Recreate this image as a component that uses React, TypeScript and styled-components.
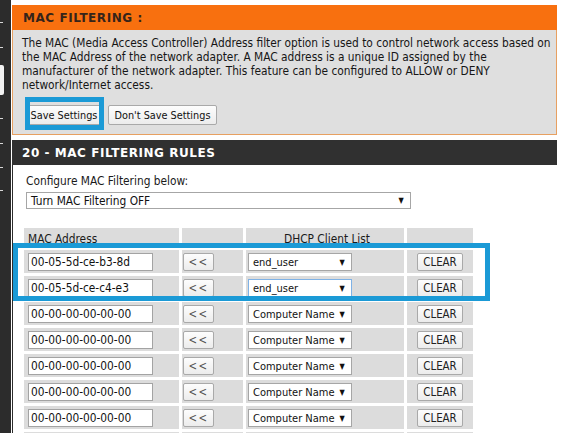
import React from "react";
import styled, { createGlobalStyle } from "styled-components";

const uiFont = `"DejaVu Sans Condensed", "Liberation Sans", sans-serif`;
const titleFont = `"DejaVu Sans", "Liberation Sans", sans-serif`;
const highlight = "#1b9ad6";
const textSize = "11.8px";

const GlobalStyle = createGlobalStyle`
  html, body {
    margin: 0;
    padding: 0;
    background: #ffffff;
    overflow: hidden;
  }
  body {
    font-family: ${uiFont};
    font-size: ${textSize};
    color: #1a1a1a;
  }
`;

const Page = styled.div`
  display: flex;
  gap: 1px;
  height: 433px;
  overflow: hidden;
  background: #ffffff;
`;

const NavStrip = styled.div`
  width: 11px;
  flex: none;
  background: #2c2c2c;
  display: flex;
  flex-direction: column;
`;

const NavTick = styled.div<{ $gap: number; $h?: number }>`
  flex: none;
  margin-top: ${(p) => p.$gap}px;
  height: ${(p) => p.$h ?? 1}px;
  width: ${(p) => (p.$h ? 4 : 3)}px;
  background: ${(p) => (p.$h ? "#f2f2f2" : "#d8d8d8")};
  border-radius: ${(p) => (p.$h ? "0 2px 2px 0" : "0")};
`;

const Content = styled.div`
  width: 545px;
  flex: none;
  padding-top: 5px;
  display: flex;
  flex-direction: column;
  min-height: 0;
`;

const OrangeBox = styled.section`
  flex: none;
  display: flex;
  flex-direction: column;
`;

const OrangeHeader = styled.h2`
  flex: none;
  margin: 0;
  height: 25px;
  background: #f8700f;
  display: flex;
  align-items: center;
  padding-left: 11px;
  font-family: ${titleFont};
  font-weight: bold;
  font-size: 12px;
  letter-spacing: 0.55px;
  color: #35241a;
`;

const OrangeBody = styled.div`
  flex: none;
  background: #dfdfdf;
  border: 1px solid #e7a061;
  border-top: none;
  padding: 6px 6px 9px 9px;
  height: 105px;
  box-sizing: border-box;
`;

const Intro = styled.p`
  margin: 0;
  line-height: 14px;
  font-size: ${textSize};
  color: #161616;
  white-space: nowrap;
`;

const ButtonRow = styled.div`
  display: flex;
  gap: 7px;
  margin-top: 13px;
  padding-left: 5px;
`;

const Btn = styled.button<{ $w?: number }>`
  font-family: ${uiFont};
  font-size: 10.8px;
  color: #111;
  height: 20px;
  ${(p) => (p.$w ? `width: ${p.$w}px;` : "")}
  padding: 0;
  white-space: nowrap;
  border: 1px solid #a9a9a9;
  border-radius: 2px;
  background: linear-gradient(#fdfdfd, #ececec);
  cursor: pointer;
`;

const SmallBtn = styled(Btn)<{ $soft?: boolean }>`
  height: 18px;
  font-size: 11.4px;
  color: ${(p) => (p.$soft ? "#555" : "#222")};
  letter-spacing: ${(p) => (p.$soft ? "1.5px" : "0")};
`;

const Marked = styled.span`
  position: relative;
  display: inline-flex;
`;

const Outline = styled.span<{ $l: number; $t: number; $w: number; $h: number }>`
  position: absolute;
  left: ${(p) => p.$l}px;
  top: ${(p) => p.$t}px;
  width: ${(p) => p.$w}px;
  height: ${(p) => p.$h}px;
  box-sizing: border-box;
  border: 5px solid ${highlight};
  pointer-events: none;
`;

const DarkHeader = styled.h2`
  flex: none;
  margin: 5px 0 0 0;
  height: 25px;
  background: #303030;
  display: flex;
  align-items: center;
  padding-left: 10px;
  font-family: ${titleFont};
  font-weight: bold;
  font-size: 12px;
  letter-spacing: 0.55px;
  color: #ffffff;
`;

const RulesBody = styled.div`
  flex: 1 1 auto;
  min-height: 0;
  overflow: hidden;
  border-left: 1px solid #2c2c2c;
  padding: 9px 0 0 11px;
  background: #ffffff;
`;

const Label = styled.div`
  margin-left: 2px;
  line-height: 14px;
  font-size: ${textSize};
`;

const FakeSelect = styled.div<{ $w: number; $focus?: boolean; $size?: string }>`
  box-sizing: border-box;
  width: ${(p) => p.$w}px;
  height: ${(p) => (p.$focus !== undefined ? 18 : 17)}px;
  border: 1px solid ${(p) => (p.$focus ? "#7fb2e6" : "#a6a6a6")};
  background: #ffffff;
  display: flex;
  align-items: center;
  justify-content: space-between;
  gap: 4px;
  padding: 0 6px 0 4px;
  font-size: ${(p) => p.$size ?? textSize};
  color: #111;
  white-space: nowrap;
`;

const Arrow = styled.span`
  font-family: "DejaVu Sans", sans-serif;
  font-size: 8px;
  color: #111;
  transform: scaleX(0.85);
`;

const TopSelectWrap = styled.div`
  margin: 4px 0 0 2px;
`;

const TableWrap = styled.div`
  position: relative;
  margin-top: 19px;
`;

const Grid = styled.div`
  display: grid;
  grid-template-columns: 155px 61px 158px 66px;
  grid-template-rows: 19px;
  grid-auto-rows: 23px;
  gap: 3px;
`;

const HeadCell = styled.div<{ $center?: boolean }>`
  background: #dcdcdc;
  font-size: ${textSize};
  display: flex;
  align-items: flex-end;
  justify-content: ${(p) => (p.$center ? "center" : "flex-start")};
  padding: 0 0 1px 4px;
  color: #1a1a1a;
`;

const Cell = styled.div<{ $align?: "start" | "center"; $pad?: number }>`
  background: #dcdcdc;
  display: flex;
  align-items: flex-start;
  justify-content: ${(p) => (p.$align === "center" ? "center" : "flex-start")};
  padding: 3px 0 0 ${(p) => p.$pad ?? 0}px;
  box-sizing: border-box;
`;

const MacInput = styled.input`
  box-sizing: border-box;
  width: 125px;
  height: 18px;
  border: 1px solid #a3a3a3;
  padding: 0 2px;
  font-family: ${uiFont};
  font-size: ${textSize};
  color: #111;
  background: #fff;
  outline: none;
`;

type Rule = { mac: string; client: string; focus?: boolean };

const rules: Rule[] = [
  { mac: "00-05-5d-ce-b3-8d", client: "end_user" },
  { mac: "00-05-5d-ce-c4-e3", client: "end_user", focus: true },
  { mac: "00-00-00-00-00-00", client: "Computer Name" },
  { mac: "00-00-00-00-00-00", client: "Computer Name" },
  { mac: "00-00-00-00-00-00", client: "Computer Name" },
  { mac: "00-00-00-00-00-00", client: "Computer Name" },
  { mac: "00-00-00-00-00-00", client: "Computer Name" },
];

const navMarks: { gap: number; h?: number }[] = [
  { gap: 22 },
  { gap: 24 },
  { gap: 17, h: 30 },
  { gap: 23 },
  { gap: 24 },
  { gap: 23 },
  { gap: 22 },
];

export default function App() {
  return (
    <>
      <GlobalStyle />
      <Page>
        <NavStrip>
          {navMarks.map((m, i) => (
            <NavTick key={i} $gap={m.gap} $h={m.h} />
          ))}
        </NavStrip>
        <Content>
          <OrangeBox>
            <OrangeHeader>MAC FILTERING :</OrangeHeader>
            <OrangeBody>
              <Intro>
                The MAC (Media Access Controller) Address filter option is used to control network access based on
                <br />
                the MAC Address of the network adapter. A MAC address is a unique ID assigned by the
                <br />
                manufacturer of the network adapter. This feature can be configured to ALLOW or DENY
                <br />
                network/Internet access.
              </Intro>
              <ButtonRow>
                <Marked>
                  <Btn $w={74}>Save Settings</Btn>
                  <Outline $l={-2} $t={-8} $w={79} $h={33} />
                </Marked>
                <Btn $w={109}>Don't Save Settings</Btn>
              </ButtonRow>
            </OrangeBody>
          </OrangeBox>

          <DarkHeader>20 - MAC FILTERING RULES</DarkHeader>
          <RulesBody>
            <Label>Configure MAC Filtering below:</Label>
            <TopSelectWrap>
              <FakeSelect $w={385}>
                <span>Turn MAC Filtering OFF</span>
                <Arrow>▼</Arrow>
              </FakeSelect>
            </TopSelectWrap>
            <TableWrap>
              <Grid>
                <HeadCell>MAC Address</HeadCell>
                <HeadCell />
                <HeadCell $center>DHCP Client List</HeadCell>
                <HeadCell />
                {rules.map((r, i) => (
                  <React.Fragment key={i}>
                    <Cell $pad={4}>
                      <MacInput defaultValue={r.mac} readOnly />
                    </Cell>
                    <Cell $pad={1}>
                      <SmallBtn $w={31} $soft>&lt;&lt;</SmallBtn>
                    </Cell>
                    <Cell $pad={2}>
                      <FakeSelect $w={104} $focus={!!r.focus} $size="11px">
                        <span>{r.client}</span>
                        <Arrow>▼</Arrow>
                      </FakeSelect>
                    </Cell>
                    <Cell $align="center">
                      <SmallBtn $w={46}>CLEAR</SmallBtn>
                    </Cell>
                  </React.Fragment>
                ))}
                {/* next rule row, only its top edge shows above the fold */}
                <Cell />
                <Cell />
                <Cell />
                <Cell />
              </Grid>
              <Outline $l={-11} $t={15} $w={477} $h={58} />
            </TableWrap>
          </RulesBody>
        </Content>
      </Page>
    </>
  );
}
